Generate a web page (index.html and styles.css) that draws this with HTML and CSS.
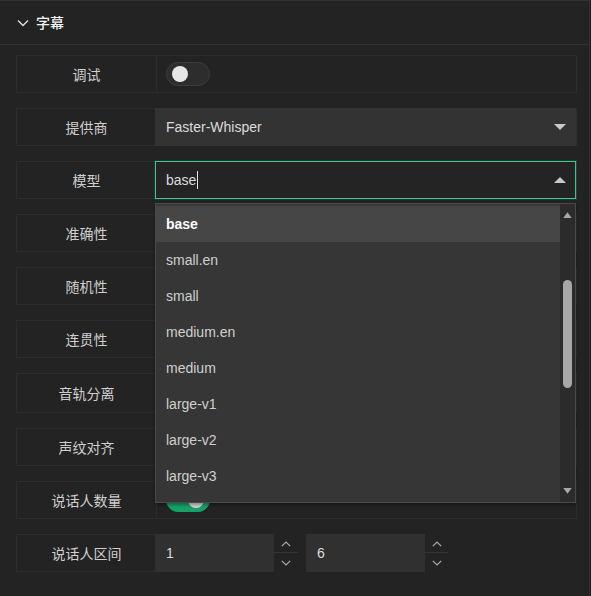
FILE: index.html
```html
<!DOCTYPE html>
<html lang="zh-CN">
<head>
<meta charset="utf-8">
<title>字幕</title>
<link rel="stylesheet" href="styles.css">
</head>
<body>
<div class="panel">
  <div class="panel-header">
    <svg class="chev" width="12" height="8" viewBox="0 0 12 8"><path d="M1 1.5 L6 6.5 L11 1.5" fill="none" stroke="#e0e0e0" stroke-width="1.4"/></svg>
    <span class="panel-title">字幕</span>
  </div>
  <div class="panel-body">
    <div class="row">
      <div class="label">调试</div>
      <div class="value value-pad"><span class="switch"><span class="knob"></span></span></div>
    </div>
    <div class="row">
      <div class="label">提供商</div>
      <div class="value">
        <div class="select"><span class="select-text">Faster-Whisper</span><span class="tri tri-down"></span></div>
      </div>
    </div>
    <div class="row">
      <div class="label">模型</div>
      <div class="value value-open">
        <div class="select select-focus"><span class="select-text">base<span class="caret"></span></span><span class="tri tri-up"></span></div>
        <div class="dropdown">
          <ul class="options">
            <li class="option option-active">base</li>
            <li class="option">small.en</li>
            <li class="option">small</li>
            <li class="option">medium.en</li>
            <li class="option">medium</li>
            <li class="option">large-v1</li>
            <li class="option">large-v2</li>
            <li class="option">large-v3</li>
          </ul>
          <div class="scrollbar">
            <svg class="sb-arrow" width="9" height="6" viewBox="0 0 9 6"><polygon points="4.5,0.3 8.7,6 0.3,6" fill="#a8a8a8"/></svg>
            <div class="sb-thumb"></div>
            <svg class="sb-arrow sb-arrow-down" width="9" height="6" viewBox="0 0 9 6"><polygon points="0.3,0 8.7,0 4.5,5.7" fill="#a8a8a8"/></svg>
          </div>
        </div>
      </div>
    </div>
    <div class="row">
      <div class="label">准确性</div>
      <div class="value"></div>
    </div>
    <div class="row">
      <div class="label">随机性</div>
      <div class="value"></div>
    </div>
    <div class="row">
      <div class="label">连贯性</div>
      <div class="value"></div>
    </div>
    <div class="row row-tall">
      <div class="label">音轨分离</div>
      <div class="value value-pad"><span class="switch"><span class="knob"></span></span></div>
    </div>
    <div class="row">
      <div class="label">声纹对齐</div>
      <div class="value value-pad"><span class="switch"><span class="knob"></span></span></div>
    </div>
    <div class="row">
      <div class="label">说话人数量</div>
      <div class="value value-pad"><span class="switch switch-on"><span class="knob"></span></span></div>
    </div>
    <div class="row">
      <div class="label">说话人区间</div>
      <div class="value value-plain">
        <div class="number">
          <span class="number-input">1</span>
          <span class="spinner">
            <span class="spin-btn"><svg width="10" height="6" viewBox="0 0 10 6"><path d="M0.8 5.2 L5 1 L9.2 5.2" fill="none" stroke="#a9adb3" stroke-width="1.2"/></svg></span>
            <span class="spin-btn spin-btn-down"><svg width="10" height="6" viewBox="0 0 10 6"><path d="M0.8 0.8 L5 5 L9.2 0.8" fill="none" stroke="#a9adb3" stroke-width="1.2"/></svg></span>
          </span>
        </div>
        <div class="number">
          <span class="number-input">6</span>
          <span class="spinner spinner-narrow">
            <span class="spin-btn"><svg width="10" height="6" viewBox="0 0 10 6"><path d="M0.8 5.2 L5 1 L9.2 5.2" fill="none" stroke="#a9adb3" stroke-width="1.2"/></svg></span>
            <span class="spin-btn spin-btn-down"><svg width="10" height="6" viewBox="0 0 10 6"><path d="M0.8 0.8 L5 5 L9.2 0.8" fill="none" stroke="#a9adb3" stroke-width="1.2"/></svg></span>
          </span>
        </div>
      </div>
    </div>
  </div>
</div>
</body>
</html>
```

FILE: styles.css
```css
html, body {
  margin: 0;
  padding: 0;
}
body {
  background: #1e1e1e;
  font-family: "Liberation Sans", "Noto Sans CJK SC", sans-serif;
  font-size: 14px;
  color: #d2d2d2;
}
.panel {
  width: 590px;
  min-height: 596px;
  box-sizing: border-box;
  background: #232323;
  border-top: 1px solid #313131;
  border-right: 1px solid #313131;
}
.panel-header {
  height: 43px;
  border-bottom: 1px solid #313131;
  display: flex;
  align-items: center;
  padding-left: 17px;
  gap: 7px;
}
.chev {
  display: block;
  margin-top: 0;
}
.panel-title {
  color: #f2f2f2;
  font-size: 14px;
  line-height: 20px;
  font-family: "Noto Sans CJK SC", sans-serif;
  font-weight: 500;
  margin-top: -1px;
}
.panel-body {
  padding: 10px 12px 0 16px;
}
.row {
  display: flex;
  height: 38px;
  margin-bottom: 15px;
}
.row-tall {
  height: 40px;
}
.label {
  width: 141px;
  flex: none;
  box-sizing: border-box;
  border: 1px solid #2d2d2d;
  display: flex;
  align-items: center;
  justify-content: center;
  color: #cfcfcf;
  font-family: "Noto Sans CJK SC", sans-serif;
  line-height: 20px;
}
.value {
  flex: 1;
  box-sizing: border-box;
  border: 1px solid #2d2d2d;
  border-left: none;
  display: flex;
  align-items: center;
  min-width: 0;
}
.value-pad {
  padding-left: 9px;
}
.value-plain {
  border: none;
  align-items: stretch;
}
.value-open {
  position: relative;
}

/* switch */
.switch {
  position: relative;
  display: block;
  width: 44px;
  height: 24px;
  box-sizing: border-box;
  border-radius: 12px;
  background: #2d2d2d;
  border: 1px solid #3d3d3d;
}
.knob {
  position: absolute;
  top: 3px;
  left: 5px;
  width: 16px;
  height: 16px;
  border-radius: 50%;
  background: #e6e6e6;
}
.switch-on {
  background: #17a068;
  border-color: #17a068;
}
.switch-on .knob {
  left: auto;
  right: 5px;
  background: #d4d4d4;
}

/* select */
.select {
  flex: 1;
  height: 38px;
  margin: -1px 0 -1px -2px;
  box-sizing: border-box;
  background: #333333;
  display: flex;
  align-items: center;
  justify-content: space-between;
  padding: 0 10px 0 11px;
  color: #dcdcdc;
}
.select-focus {
  background: #242424;
  border: 1px solid #35c98a;
  box-shadow: 0 0 0 1px rgba(53, 201, 138, 0.12);
  padding: 0 9px 0 10px;
}
.select-text {
  display: flex;
  align-items: center;
  line-height: 18px;
}
.caret {
  display: inline-block;
  width: 1px;
  height: 18px;
  background: #e6e6e6;
  margin-left: 1px;
}
.tri {
  width: 0;
  height: 0;
  border-left: 6px solid transparent;
  border-right: 6px solid transparent;
}
.tri-down {
  border-top: 6px solid #c9c9c9;
}
.tri-up {
  border-bottom: 6px solid #c9c9c9;
}

/* dropdown */
.dropdown {
  position: absolute;
  z-index: 10;
  top: 41px;
  left: -2px;
  width: 421px;
  height: 300px;
  box-sizing: border-box;
  background: #363636;
  border: 1px solid #4a4a4a;
  box-shadow: 0 2px 3px rgba(0, 0, 0, 0.35);
  display: flex;
}
.options {
  list-style: none;
  margin: 0;
  padding: 2px 0 0 0;
  flex: 1;
}
.option {
  height: 36px;
  display: flex;
  align-items: center;
  padding-left: 10px;
  color: #d0d0d0;
}
.option-active {
  background: #464646;
  color: #ffffff;
  font-weight: bold;
}
.scrollbar {
  width: 15px;
  flex: none;
  background: #2b2b2b;
  display: flex;
  flex-direction: column;
  align-items: center;
  padding: 8px 0 8px 0;
  box-sizing: border-box;
}
.sb-arrow {
  display: block;
  flex: none;
}
.sb-thumb {
  width: 9px;
  height: 108px;
  border-radius: 4.5px;
  background: #a6a6a6;
  margin-top: 62px;
  flex: none;
}
.sb-arrow-down {
  margin-top: auto;
}

/* number inputs */
.number {
  display: flex;
  margin-left: -2px;
  margin-right: 8px;
}
.number + .number {
  margin-left: 0;
}
.number-input {
  width: 119px;
  box-sizing: border-box;
  background: #303030;
  display: flex;
  align-items: center;
  padding-left: 11px;
  color: #dcdcdc;
}
.spinner {
  width: 24px;
  display: flex;
  flex-direction: column;
}
.spinner-narrow {
  width: 23px;
}
.spin-btn {
  height: 19px;
  display: flex;
  align-items: center;
  justify-content: center;
  border-bottom: 1px solid #333333;
  box-sizing: border-box;
}
.spin-btn svg {
  display: block;
  margin-top: 1px;
}
.spin-btn-down {
  border-bottom: none;
}
.spin-btn-down svg {
  margin-top: 0;
}
```
